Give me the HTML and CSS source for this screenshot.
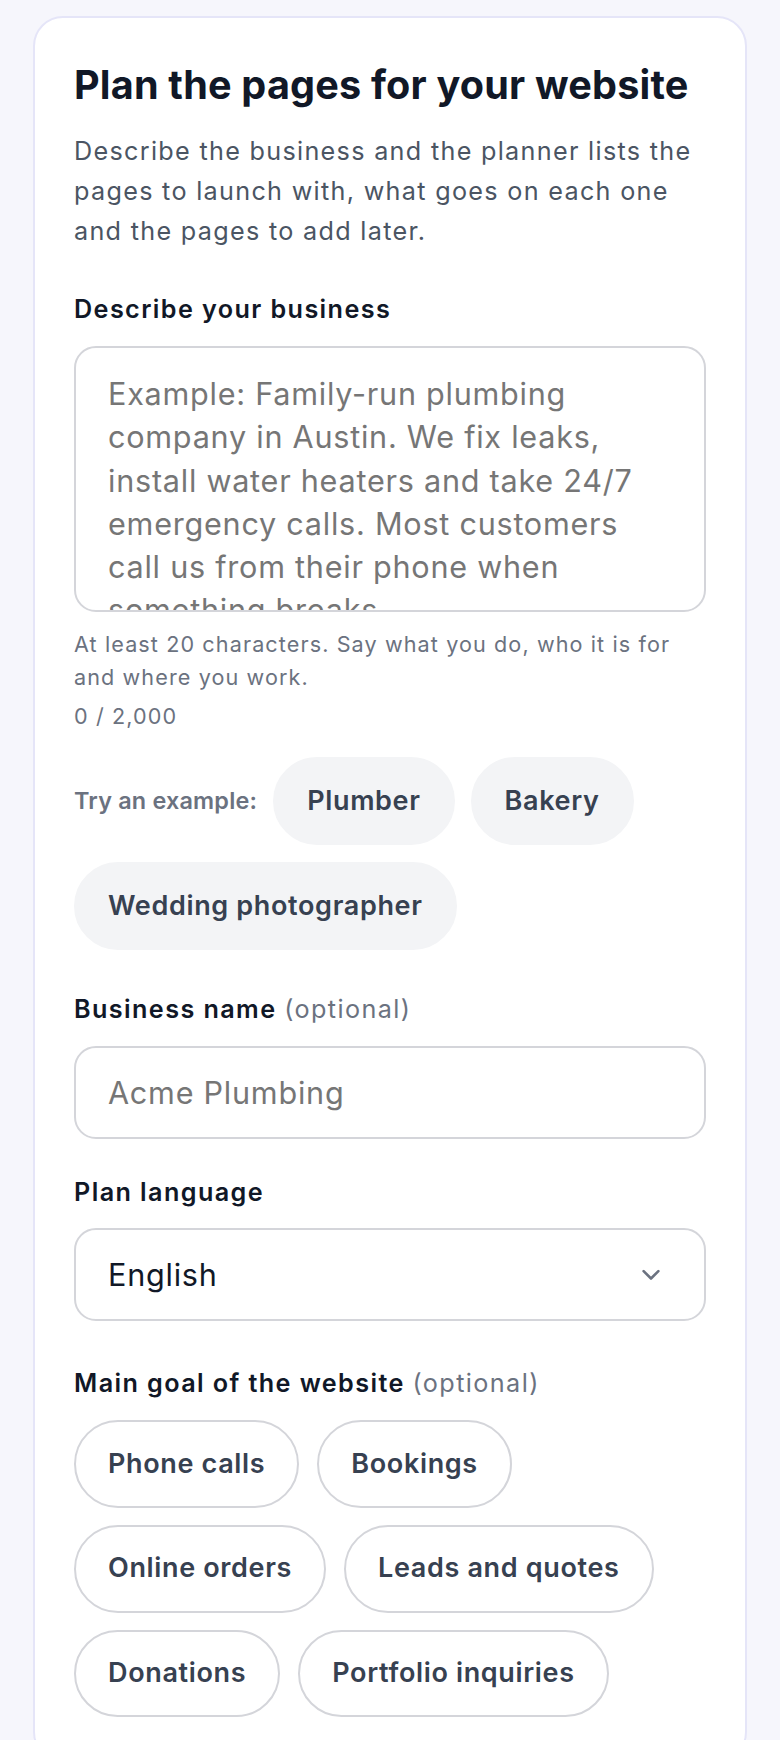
FILE: index.html
```html
<!DOCTYPE html>
<html lang="en">
<head>
<meta charset="utf-8">
<title>Plan the pages for your website</title>
<link rel="stylesheet" href="styles.css">
</head>
<body>
<main class="page">
  <section class="card">
    <h1 class="title">Plan the pages for your website</h1>
    <p class="lead">Describe the business and the planner lists the pages to launch with, what goes on each one and the pages to add later.</p>

    <div class="field">
      <label class="label" for="desc">Describe your business</label>
      <textarea id="desc" class="control textarea" rows="5" placeholder="Example: Family-run plumbing company in Austin. We fix leaks, install water heaters and take 24/7 emergency calls. Most customers call us from their phone when something breaks."></textarea>
      <p class="hint">At least 20 characters. Say what you do, who it is for and where you work.</p>
      <p class="count">0 / 2,000</p>
      <div class="examples">
        <span class="examples-label">Try an example:</span>
        <button type="button" class="chip chip-soft">Plumber</button>
        <button type="button" class="chip chip-soft">Bakery</button>
        <button type="button" class="chip chip-soft">Wedding photographer</button>
      </div>
    </div>

    <div class="field field-name">
      <label class="label" for="name">Business name <span class="optional">(optional)</span></label>
      <input id="name" class="control input" type="text" placeholder="Acme Plumbing">
    </div>

    <div class="field field-lang">
      <label class="label" for="lang">Plan language</label>
      <div class="select-wrap">
        <select id="lang" class="control select">
          <option>English</option>
        </select>
        <svg class="chevron" width="18" height="11" viewBox="0 0 18 11" aria-hidden="true">
          <polyline points="1.6,1.6 9,9 16.4,1.6" fill="none" stroke="#6b7280" stroke-width="2.6" stroke-linecap="round" stroke-linejoin="round"/>
        </svg>
      </div>
    </div>

    <div class="field field-goal">
      <span class="label">Main goal of the website <span class="optional">(optional)</span></span>
      <div class="chips">
        <button type="button" class="chip chip-outline">Phone calls</button>
        <button type="button" class="chip chip-outline">Bookings</button>
        <button type="button" class="chip chip-outline">Online orders</button>
        <button type="button" class="chip chip-outline">Leads and quotes</button>
        <button type="button" class="chip chip-outline">Donations</button>
        <button type="button" class="chip chip-outline">Portfolio inquiries</button>
      </div>
    </div>
  </section>
</main>
</body>
</html>
```

FILE: styles.css
```css
* {
  box-sizing: border-box;
}

html,
body {
  margin: 0;
  background: #f6f6fc;
}

body {
  font-family: "Inter", "Noto Sans", "Liberation Sans", sans-serif;
  color: #111827;
}

.page {
  padding: 16px 33px 0;
}

.card {
  background: #ffffff;
  border: 2px solid #e5e5f8;
  border-radius: 30px;
  padding: 43px 39px 43px;
}

.title {
  margin: 0;
  font-size: 39.6px;
  line-height: 49.5px;
  font-weight: 700;
  letter-spacing: 0.2px;
  color: #111827;
}

.lead {
  margin: 20px 0 0;
  font-size: 25.2px;
  line-height: 40.3px;
  letter-spacing: 1.3px;
  color: #4b5563;
}

.field {
  display: flex;
  flex-direction: column;
  margin-top: 40px;
}

.field-name {
  margin-top: 41px;
}

.field-lang {
  margin-top: 35px;
}

.field-goal {
  margin-top: 44px;
}

.label {
  display: block;
  font-size: 25.2px;
  line-height: 37.8px;
  font-weight: 600;
  letter-spacing: 1.4px;
  color: #111827;
  margin-bottom: 17px;
}

.optional {
  font-weight: 400;
  color: #6b7280;
}

.control {
  width: 100%;
  margin: 0;
  border: 2px solid #d4d5da;
  border-radius: 22px;
  background: #ffffff;
  font-family: inherit;
  font-size: 30.6px;
  line-height: 43.2px;
  letter-spacing: 0.75px;
  color: #111827;
  outline: none;
}

.control::placeholder {
  color: #767676;
  opacity: 1;
}

.textarea {
  display: block;
  height: 266px;
  padding: 24px 40px 24px 32px;
  resize: none;
  overflow: hidden;
}

.input {
  height: 93px;
  padding: 0 32px;
}

.select-wrap {
  position: relative;
}

.select {
  display: block;
  height: 93px;
  padding: 0 90px 0 32px;
  appearance: none;
  -webkit-appearance: none;
}

.chevron {
  position: absolute;
  right: 46px;
  top: 50%;
  transform: translateY(-50%);
  pointer-events: none;
}

.hint {
  margin: 16px 0 0;
  font-size: 21.6px;
  line-height: 32.4px;
  letter-spacing: 1.1px;
  color: #6b7280;
}

.count {
  margin: 7px 0 0;
  font-size: 21.6px;
  line-height: 32.4px;
  letter-spacing: 1.1px;
  color: #6b7280;
}

.examples {
  display: flex;
  flex-wrap: wrap;
  align-items: center;
  gap: 17px 16px;
  margin-top: 25px;
}

.examples-label {
  font-size: 23.4px;
  line-height: 32px;
  font-weight: 600;
  letter-spacing: 0.2px;
  color: #6b7280;
}

.chips {
  display: flex;
  flex-wrap: wrap;
  gap: 17px 18px;
}

.chip {
  font-family: inherit;
  font-size: 27px;
  line-height: 40.5px;
  font-weight: 600;
  letter-spacing: 0.65px;
  color: #374151;
  padding: 21.6px 32px;
  border-radius: 999px;
  border: 2px solid transparent;
  background: #ffffff;
  cursor: pointer;
  margin: 0;
}

.chip-soft {
  background: #f3f4f6;
  border-color: #f3f4f6;
}

.chip-outline {
  border-color: #d4d5da;
}
```
